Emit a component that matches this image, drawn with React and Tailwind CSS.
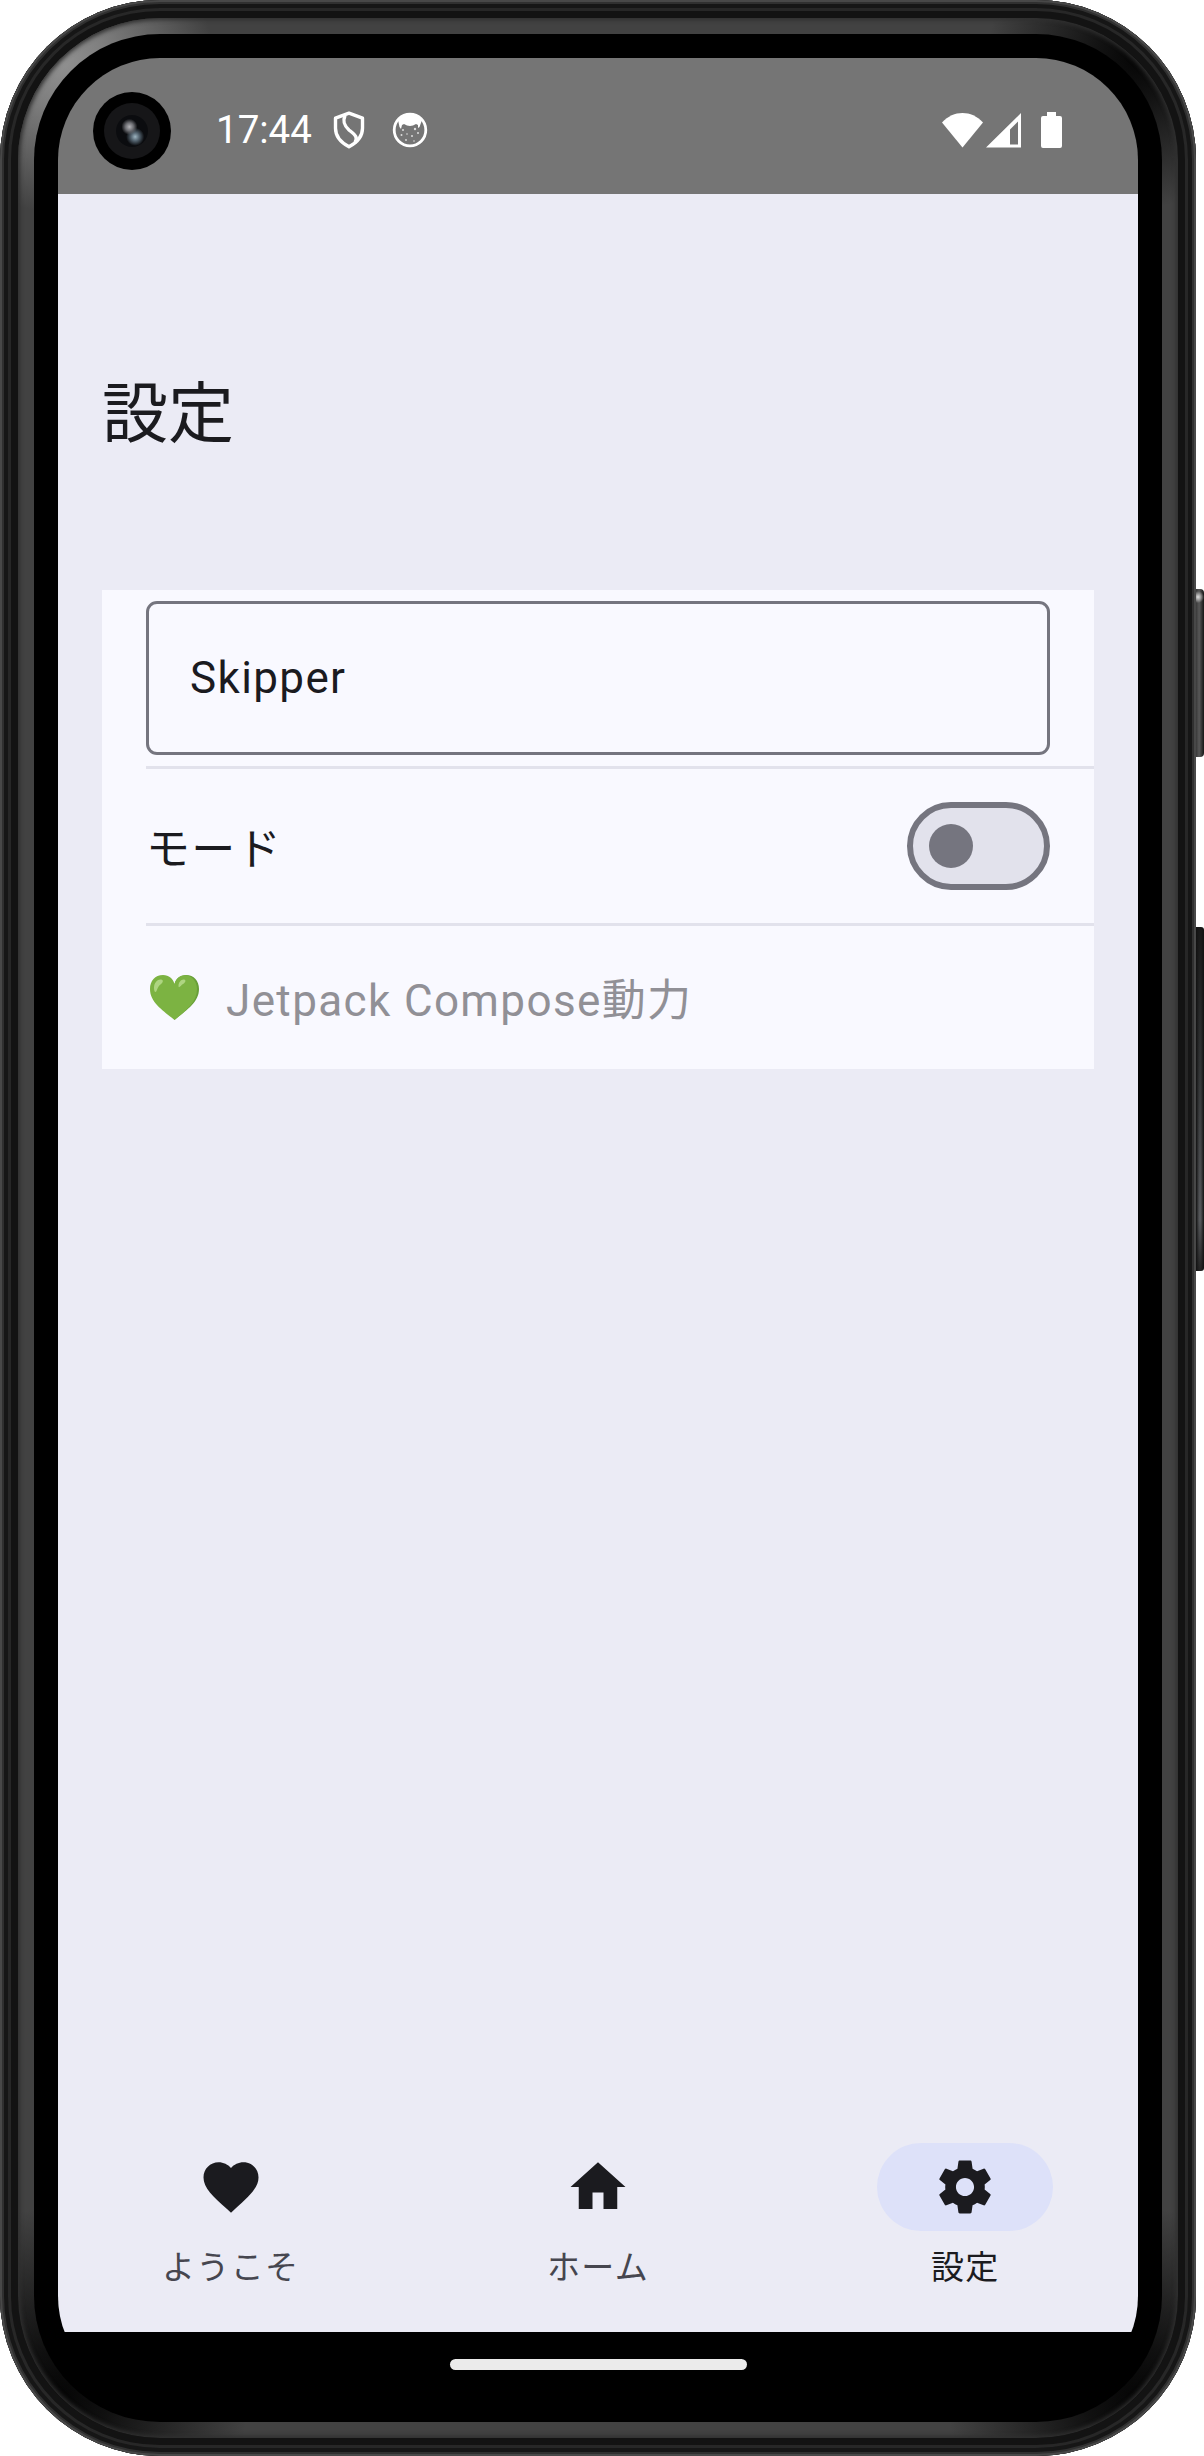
import React from 'react';

const HEART = 'M12 21.35l-1.45-1.32C5.4 15.36 2 12.28 2 8.5 2 5.42 4.42 3 7.5 3c1.74 0 3.41.81 4.5 2.09C13.09 3.81 14.76 3 16.5 3 19.58 3 22 5.42 22 8.5c0 3.78-3.4 6.86-8.55 11.54L12 21.35z';
const HOME = 'M10 20v-6h4v6h5v-8h3L12 3 2 12h3v8z';
const GEAR = 'M19.14 12.94c.04-.3.06-.61.06-.94 0-.32-.02-.64-.07-.94l2.03-1.58c.18-.14.23-.41.12-.61l-1.92-3.32c-.12-.22-.37-.29-.59-.22l-2.39.96c-.5-.38-1.03-.7-1.62-.94l-.36-2.54c-.04-.24-.24-.41-.48-.41h-3.84c-.24 0-.43.17-.47.41l-.36 2.54c-.59.24-1.13.57-1.62.94l-2.39-.96c-.22-.08-.47 0-.59.22L2.74 8.87c-.12.21-.08.47.12.61l2.03 1.58c-.05.3-.09.63-.09.94s.02.64.07.94l-2.03 1.58c-.18.14-.23.41-.12.61l1.92 3.32c.12.22.37.29.59.22l2.39-.96c.5.38 1.03.7 1.62.94l.36 2.54c.05.24.24.41.48.41h3.84c.24 0 .44-.17.47-.41l.36-2.54c.59-.24 1.13-.56 1.62-.94l2.39.96c.22.08.47 0 .59-.22l1.92-3.32c.12-.22.07-.47-.12-.61l-2.01-1.58zM12 15.3c-1.82 0-3.3-1.48-3.3-3.3s1.48-3.3 3.3-3.3 3.3 1.48 3.3 3.3-1.48 3.3-3.3 3.3z';

function Camera() {
  return (
    <div className="absolute left-[35px] top-[34px] flex size-[78px] items-center justify-center rounded-full bg-black">
      <div className="flex size-[56px] items-center justify-center rounded-full bg-[#161618]">
        <div className="size-8 rounded-full bg-[radial-gradient(circle_at_42%_37%,#b4b4b8_0,#6d6e73_4px,transparent_8px),radial-gradient(circle_at_60%_68%,#9db4c0_0,#566672_4px,transparent_9px)] bg-[#0b0c0f]" />
      </div>
    </div>
  );
}

function StatusBar() {
  return (
    <div className="relative flex h-[136px] shrink-0 items-center bg-[#757575] pl-[158px] pr-[76px] pt-2 text-white">
      <Camera />
      <span className="text-[38.5px] leading-none">17:44</span>
      <svg className="ml-[21px] h-[38px] w-8" viewBox="0 0 32 38" fill="none" stroke="currentColor" strokeWidth="3.4" strokeLinejoin="round">
        <path d="M16 2.200L2.500 7.200v10C2.500 25 8 31.500 16 35.700 24 31.500 29.500 25 29.500 17.200v-10L16 2.200z" />
        <path d="M12 4.500c-2.500 6-1 10 4 14.500 5.500 4.500 9.500 7 6 12.500" />
      </svg>
      <svg className="ml-[27px] size-[36px]" viewBox="0 0 36 36">
        <circle cx="18" cy="18" r="15.800" fill="none" stroke="currentColor" strokeWidth="2.800" />
        <path fill="currentColor" d="M6 8C9 3 13 1.500 18 1.500S27 3 30 8l-2.500 7-1.500 1v-3l-2-1c-4 2.500-8 2.500-12 0l-2 1-1 4-1.500-2z" />
        <g fill="currentColor" opacity=".75">
          <circle cx="11" cy="18" r="1" /><circle cx="23" cy="17" r="1.200" /><circle cx="9.500" cy="23" r="1" /><circle cx="15" cy="22" r=".8" /><circle cx="20" cy="24" r="1" /><circle cx="26" cy="21" r="1" /><circle cx="14" cy="28" r=".9" /><circle cx="22" cy="29" r=".8" />
        </g>
      </svg>
      <div className="ml-auto flex items-center">
        <svg className="h-[35px] w-[41px]" viewBox="0 0 41 35" fill="currentColor"><path d="M20.500 34.500L0 9.500C6 3 13 0 20.500 0S35 3 41 9.500z" /></svg>
        <svg className="ml-[3px] size-[35px]" viewBox="0 0 35 35"><path fill="currentColor" fillRule="evenodd" d="M35 0v34.500H0zM32 8.500l-8 8V31.500h8z" /></svg>
        <svg className="ml-[20px] h-9 w-[21px]" viewBox="0 0 21 36" fill="currentColor"><path d="M6 0h9v4h4a2 2 0 012 2v28a2 2 0 01-2 2H2a2 2 0 01-2-2V6a2 2 0 012-2h4z" /></svg>
      </div>
    </div>
  );
}

function GreenHeart() {
  return (
    <svg className="h-[45px] w-[49px]" viewBox="0 0 49 45">
      <path fill="#689f38" d="M24.500 9C26 3.500 30 0 36 0c8 0 13 6 13 14 0 14-14 22-24.500 31z" />
      <path fill="#7cb342" d="M24.500 9C23 3.500 19 0 13 0 5 0 0 6 0 14c0 14 14 22 24.500 31C35 36 47 28 47 14 47 7 42 .3 35.500.3 30 .3 26 3.500 24.500 9z" />
      <path fill="#aed581" d="M4 13C4 7 8 4 11 4.500c3 .5 2 3-.5 5C7 12 7 17 5.500 17 4.500 17 4 15 4 13zM28.500 11c0-4 3-7 5.500-6.500 2.500.5 1.500 3-1 4.500-2 1.200-4.500 5-4.500 2z" />
    </svg>
  );
}

function NavItem({ label, path, active }) {
  return (
    <button className={`flex flex-1 flex-col items-center ${active ? 'text-[#1b1b1f]' : 'text-[#46464f]'}`}>
      <span className={`flex h-[88px] w-44 items-center justify-center rounded-full ${active ? 'bg-[#dde1f9]' : ''}`}>
        <svg className="size-[66px] text-[#1b1b1f]" viewBox="0 0 24 24" fill="currentColor"><path d={path} /></svg>
      </span>
      <span className="mt-[15px] text-[33px] leading-[44px] tracking-[1.375px]">{label}</span>
    </button>
  );
}

function Screen() {
  return (
    <div className="flex h-[2340px] w-[1080px] flex-col overflow-hidden rounded-[102px] bg-black">
      <StatusBar />
      <main className="flex h-[2138px] flex-col bg-[#ebebf5] text-[#1b1b1f]">
        <h1 className="ml-11 mt-[173px] text-[66px] leading-[96px]">設定</h1>
        <section className="mx-11 mt-[127px] flex h-[479px] flex-col bg-[#f9f9ff] pl-11 text-[44px] tracking-[1.375px]">
          <div className="mr-11 mt-[11px] flex h-[154px] shrink-0 items-center rounded-[11px] border-[3px] border-[#75757f] px-[41px]">Skipper</div>
          <div className="mt-[11px] flex h-40 shrink-0 items-center justify-between border-y-[3px] border-[#e2e2ec] pr-11">
            <span className="pt-[7px]">モード</span>
            <div className="flex h-[88px] w-[143px] items-center rounded-full border-[6px] border-[#75757f] bg-[#e2e2ec] pl-4">
              <div className="size-11 rounded-full bg-[#75757f]" />
            </div>
          </div>
          <div className="flex flex-1 items-center pl-1 text-[#919096]">
            <GreenHeart />
            <span className="ml-[27px] whitespace-nowrap pt-[7px]">Jetpack Compose動力</span>
          </div>
        </section>
        <nav className="mt-auto flex h-[189px] gap-[22px]">
          <NavItem label="ようこそ" path={HEART} />
          <NavItem label="ホーム" path={HOME} />
          <NavItem label="設定" path={GEAR} active />
        </nav>
      </main>
      <div className="mx-auto mt-[27px] h-[11px] w-[297px] rounded-full bg-[#ebebeb]" />
    </div>
  );
}

export default function App() {
  return (
    <div className="flex h-[2456px] w-[1204px] bg-white font-['Roboto','Noto_Sans_CJK_JP',sans-serif]">
      <div className="h-[2456px] w-[1196px] rounded-[160px] bg-[#131313] p-[18px] shadow-[inset_0_0_0_2px_#484848,inset_0_0_0_4px_#303030,inset_0_0_0_8px_#161616,inset_0_0_0_11px_#272727]">
        <div className="size-full rounded-[142px] bg-[radial-gradient(circle_at_45px_45px,#909090_0,#808080_40px,transparent_150px),radial-gradient(circle_at_1120px_40px,#050505_0,#121212_40px,transparent_150px),radial-gradient(circle_at_40px_2380px,#050505_0,#101010_50px,transparent_190px),radial-gradient(circle_at_1120px_2380px,#050505_0,#101010_50px,transparent_190px)] bg-[#424242] p-4 shadow-[inset_0_0_4px_2px_#303030]">
          <div className="size-full rounded-[126px] bg-black p-6">
            <Screen />
          </div>
        </div>
      </div>
      <div className="w-2">
        <div className="mt-[589px] h-[168px] rounded-r-[4px] bg-[radial-gradient(circle_at_2px_8px,#e0e0e0_0,transparent_6px),linear-gradient(to_right,#3a3a3a,#585858_40%,#151515)]" />
        <div className="mt-[170px] h-[344px] rounded-r-[3px] bg-[linear-gradient(to_right,#111_0,transparent_40%,transparent_60%,#111),linear-gradient(to_bottom,#181818,#303233_40%,#55575a_85%,#222)]" />
      </div>
    </div>
  );
}
